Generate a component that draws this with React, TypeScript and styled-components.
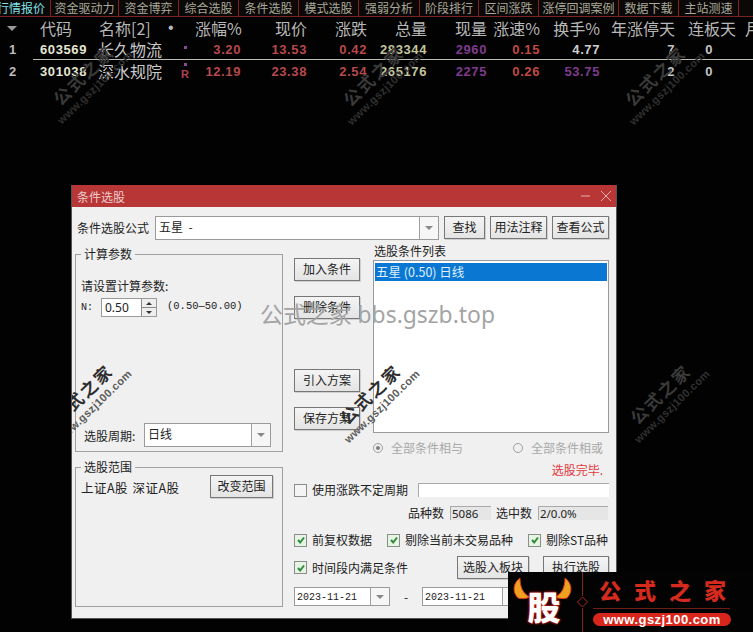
import styled, { createGlobalStyle } from "styled-components";

const CJK = `"Noto Sans CJK SC", "Liberation Sans", sans-serif`;
const COLUMNS = "33px 62px 70px 30px 46px 66px 60px 60px 60px 53px 60px 75px 61px 1fr";

const GlobalStyle = createGlobalStyle`
  html, body {
    margin: 0;
    padding: 0;
    background: #000;
  }
  body {
    font-family: ${CJK};
  }
`;

const Screen = styled.div`
  position: relative;
  width: 753px;
  height: 632px;
  overflow: hidden;
  background: #020202;
`;

const MenuBar = styled.div`
  display: flex;
  height: 16px;
  background: #0b0807;
  border-bottom: 1px solid #7a2420;
  overflow: hidden;
`;

const MenuItem = styled.div<{ $width: number; $active?: boolean }>`
  flex: 0 0 ${(props) => props.$width}px;
  display: flex;
  justify-content: ${(props) => (props.$active ? "flex-end" : "center")};
  padding-right: ${(props) => (props.$active ? "5px" : "0")};
  box-sizing: border-box;
  overflow: hidden;
  border-right: 1px solid #7a2420;
  color: ${(props) => (props.$active ? "#7fe0e8" : "#a8a89a")};
  font-size: 12px;
  line-height: 15px;
  white-space: nowrap;
`;

const MenuLabel = styled.span`
  flex-shrink: 0;
`;

const Row = styled.div<{ $height: number }>`
  display: grid;
  grid-template-columns: ${COLUMNS};
  height: ${(props) => props.$height}px;
  align-items: center;
  white-space: nowrap;
  overflow: hidden;
`;

const HeadCell = styled.div<{ $align?: string; $pad?: number }>`
  color: #b8b8b8;
  font-size: 16px;
  line-height: 22px;
  text-align: ${(props) => props.$align || "right"};
  padding-left: ${(props) => props.$pad || 0}px;
`;

const HeadDot = styled(HeadCell)`
  font-family: "Liberation Sans", sans-serif;
`;

const SortArrow = styled.span`
  display: block;
  width: 0;
  height: 0;
  margin-left: 7px;
  border-left: 5px solid transparent;
  border-right: 5px solid transparent;
  border-top: 5px solid #999;
`;

const Cell = styled.div<{ $color: string; $pad?: number }>`
  color: ${(props) => props.$color};
  font-family: "Liberation Sans", sans-serif;
  font-size: 13px;
  font-weight: 700;
  letter-spacing: 0.6px;
  text-align: right;
  padding-right: ${(props) => props.$pad || 0}px;
`;

const IndexCell = styled(Cell)`
  text-align: left;
  padding-left: 9px;
`;

const CodeCell = styled(Cell)`
  text-align: left;
  padding-left: 7px;
`;

const NameCell = styled.div`
  color: #c9c9c9;
  font-size: 16px;
  line-height: 20px;
  padding-left: 3px;
`;

const MarkCell = styled.div`
  display: flex;
  flex-direction: column;
  align-items: center;
  margin-left: 10px;
  color: #b04050;
  font-family: "Liberation Sans", sans-serif;
  font-size: 11px;
  font-weight: 700;
  line-height: 10px;
`;

const Dot = styled.span`
  width: 3px;
  height: 3px;
  margin-bottom: 3px;
  background: #8a4a9a;
`;

const RowLine = styled.div`
  height: 1px;
  margin-left: 33px;
  background: #bdbdb5;
`;

const Dialog = styled.section`
  position: absolute;
  left: 71px;
  top: 185px;
  width: 546px;
  height: 434px;
  box-sizing: border-box;
  overflow: hidden;
  background: #f0f0f0;
  border: 1px solid #555;
  border-top: none;
  color: #222;
  font-size: 12px;
`;

const TitleBar = styled.header`
  display: flex;
  align-items: center;
  justify-content: space-between;
  height: 22px;
  padding: 0 3px 0 5px;
  background: #b83636;
  color: #eccdcd;
  font-size: 12px;
`;

const WindowIcons = styled.svg`
  width: 36px;
  height: 14px;
`;

const DialogBody = styled.div`
  padding: 9px 7px 0 3px;
`;

const FormulaRow = styled.div`
  display: flex;
  align-items: flex-start;
`;

const FormulaLabel = styled.span`
  width: 80px;
  padding-left: 2px;
  box-sizing: border-box;
  line-height: 23px;
`;

const Field = styled.div<{ $width: number; $height: number }>`
  display: flex;
  flex: 0 0 ${(props) => props.$width}px;
  height: ${(props) => props.$height}px;
  box-sizing: border-box;
  background: #fff;
  border: 1px solid #9a9a9a;
`;

const FieldText = styled.span<{ $mono?: boolean }>`
  flex: 1;
  padding-left: ${(props) => (props.$mono ? "2px" : "3px")};
  font-family: ${(props) => (props.$mono ? `"Liberation Mono", monospace` : CJK)};
  font-size: ${(props) => (props.$mono ? "10px" : "12px")};
  line-height: 20px;
  white-space: pre;
`;

const DropButton = styled.span<{ $width?: number }>`
  display: flex;
  flex: 0 0 ${(props) => props.$width || 18}px;
  align-items: center;
  justify-content: center;
  background: #f6f6f6;
  border-left: 1px solid #a0a0a0;

  &::after {
    content: "";
    border-left: 4px solid transparent;
    border-right: 4px solid transparent;
    border-top: 4px solid #888;
  }
`;

const Button = styled.div<{ $width: number; $height?: number }>`
  flex: 0 0 ${(props) => props.$width}px;
  height: ${(props) => props.$height || 23}px;
  box-sizing: border-box;
  border: 1px solid #777;
  background: linear-gradient(#f4f4f4, #e4e4e4);
  box-shadow: 1px 1px 0 #cfcfcf;
  color: #222;
  font-size: 12px;
  line-height: 20px;
  text-align: center;
  white-space: nowrap;
`;

const FormulaButton = styled(Button)`
  margin-left: 5px;
`;

const Columns = styled.div`
  display: grid;
  grid-template-columns: 208px 1fr;
  gap: 11px;
  margin-top: 3px;
`;

const LeftColumn = styled.div`
  display: flex;
  flex-direction: column;
  gap: 7px;
  margin-top: 3px;
`;

const Group = styled.fieldset<{ $height: number }>`
  height: ${(props) => props.$height}px;
  box-sizing: border-box;
  margin: 0;
  padding: 0 5px 4px;
  border: 1px solid #a0a0a0;
  min-width: 0;
`;

const GroupTitle = styled.legend`
  padding: 0 3px;
  font-size: 12px;
  line-height: 16px;
`;

const ParamPrompt = styled.div`
  margin-top: 16px;
  line-height: 16px;
`;

const ParamRow = styled.div`
  display: flex;
  align-items: center;
  margin-top: 4px;
`;

const ParamName = styled.span`
  width: 20px;
  font-family: "Liberation Mono", monospace;
  font-size: 10px;
`;

const SpinBox = styled.div`
  display: flex;
  width: 56px;
  height: 19px;
  box-sizing: border-box;
  background: #fff;
  border: 1px solid #9a9a9a;
`;

const SpinValue = styled.span`
  flex: 1;
  padding-left: 3px;
  font-family: "Noto Sans", sans-serif;
  font-size: 12px;
  line-height: 18px;
`;

const SpinArrows = styled.span`
  display: flex;
  flex: 0 0 14px;
  flex-direction: column;
  border-left: 1px solid #888;
`;

const SpinArrow = styled.span<{ $up?: boolean }>`
  display: flex;
  flex: 1;
  align-items: center;
  justify-content: center;
  background: #eee;
  border-bottom: ${(props) => (props.$up ? "1px solid #888" : "none")};

  &::after {
    content: "";
    border-left: 3px solid transparent;
    border-right: 3px solid transparent;
    ${(props) => (props.$up ? "border-bottom: 3px solid #333;" : "border-top: 3px solid #333;")}
  }
`;

const ParamRange = styled.span`
  margin: -3px 0 0 10px;
  font-family: "Liberation Mono", monospace;
  font-size: 10.5px;
`;

const PeriodRow = styled.div`
  display: flex;
  align-items: center;
  margin: 106px 0 0 3px;
`;

const PeriodLabel = styled.span`
  width: 60px;
`;

const RangeRow = styled.div`
  display: flex;
  align-items: flex-start;
  justify-content: space-between;
  padding-right: 4px;
`;

const RangeText = styled.span`
  margin-top: 5px;
  font-size: 12.5px;
  line-height: 16px;
  letter-spacing: 0.5px;
  word-spacing: 1px;
`;

const RightColumn = styled.div`
  display: flex;
  flex-direction: column;
`;

const RightTop = styled.div`
  display: grid;
  grid-template-columns: 66px 1fr;
  column-gap: 13px;
`;

const ActionStack = styled.div`
  display: flex;
  flex-direction: column;
  padding-top: 15px;
`;

const ActionButton = styled(Button)<{ $gap: number }>`
  flex: 0 0 23px;
  width: 66px;
  margin-top: ${(props) => props.$gap}px;
`;

const ConditionTitle = styled.div`
  height: 17px;
  padding-left: 1px;
  line-height: 16px;
`;

const ConditionList = styled.div`
  height: 173px;
  box-sizing: border-box;
  padding: 2px 1px;
  background: #fff;
  border: 1px solid #9a9a9a;
`;

const ConditionItem = styled.div`
  height: 18px;
  padding-left: 1px;
  background: #0a78d2;
  color: #dff0ff;
  font-size: 12.5px;
  line-height: 18px;
`;

const RadioRow = styled.div`
  display: grid;
  grid-template-columns: 140px 1fr;
  margin: 8px 0 0 79px;
  color: #a8a8a8;
`;

const RadioItem = styled.label`
  display: flex;
  align-items: center;
  gap: 8px;
  line-height: 14px;
`;

const RadioMark = styled.span<{ $on?: boolean }>`
  width: 10px;
  height: 10px;
  box-sizing: border-box;
  border: 1px solid #a0a0a0;
  border-radius: 50%;
  background: ${(props) => (props.$on ? "radial-gradient(#888 30%, #f0f0f0 40%)" : "transparent")};
`;

const StatusText = styled.div`
  margin: 8px 6px 0 0;
  color: #e2383c;
  line-height: 14px;
  text-align: right;
`;

const PeriodicRow = styled.div`
  display: flex;
  align-items: center;
  justify-content: space-between;
  height: 14px;
  margin-top: 6px;
`;

const CheckLabel = styled.label`
  display: flex;
  align-items: center;
  gap: 5px;
  line-height: 14px;
  white-space: nowrap;
`;

const CheckBox = styled.span<{ $on?: boolean }>`
  display: flex;
  align-items: center;
  justify-content: center;
  width: 13px;
  height: 13px;
  box-sizing: border-box;
  border: 1px solid #8c8c8c;
  background: ${(props) => (props.$on ? "#e6f4e4" : "#f4f4f4")};
`;

const CheckIcon = styled.svg`
  width: 10px;
  height: 10px;
`;

const PeriodicInput = styled.div`
  width: 191px;
  height: 14px;
  box-sizing: border-box;
  background: #fff;
  border-left: 1px solid #aaa;
  border-top: 1px solid #aaa;
`;

const CountRow = styled.div`
  display: flex;
  align-items: center;
  justify-content: flex-end;
  height: 14px;
  margin-top: 9px;
  line-height: 14px;
`;

const CountBox = styled.span<{ $width: number }>`
  width: ${(props) => props.$width}px;
  height: 14px;
  box-sizing: border-box;
  margin: 0 5px 0 6px;
  padding-left: 1px;
  border-left: 1px solid #aaa;
  border-top: 1px solid #aaa;
  background: #e6e6e6;
  font-family: "Noto Sans", sans-serif;
  font-size: 11.5px;
  line-height: 13px;

  &:last-child {
    margin-right: 1px;
  }
`;

const OptionRow = styled.div`
  display: grid;
  grid-template-columns: 93px 141px 1fr;
  height: 14px;
  margin-top: 13px;
`;

const RunRow = styled.div`
  display: flex;
  align-items: center;
  height: 23px;
  margin-top: 9px;
`;

const RunSpacer = styled.span`
  flex: 1;
`;

const RunButton = styled(Button)`
  margin-left: 14px;
`;

const DateRow = styled.div`
  display: flex;
  align-items: center;
  margin-top: 8px;
`;

const DateDash = styled.span`
  flex: 0 0 32px;
  text-align: center;
  line-height: 19px;
`;

const Watermark = styled.div<{ $x: number; $y: number; $ink: string; $sub: string }>`
  position: absolute;
  left: ${(props) => props.$x}px;
  top: ${(props) => props.$y}px;
  width: 100px;
  transform: rotate(-44deg);
  text-align: center;
  white-space: nowrap;
  pointer-events: none;
  color: ${(props) => props.$ink};
  font-size: 17px;
  font-weight: 700;
  line-height: 18px;
  letter-spacing: 2px;

  & > small {
    display: block;
    margin-top: 2px;
    color: ${(props) => props.$sub};
    font-family: "Liberation Sans", sans-serif;
    font-size: 11px;
    letter-spacing: 0.4px;
    line-height: 12px;
  }
`;

const CenterMark = styled.div`
  position: absolute;
  left: 260px;
  top: 300px;
  color: #a4a4a4;
  font-family: "Noto Sans", ${CJK};
  font-size: 22.9px;
  line-height: 30px;
  white-space: nowrap;
`;

const Logo = styled.div`
  position: absolute;
  left: 508px;
  top: 572px;
  display: flex;
  width: 245px;
  height: 60px;
  background: #030303;
`;

const Emblem = styled.div`
  position: relative;
  flex: 0 0 68px;
  height: 60px;
  color: #fff;
  font-size: 33px;
  font-weight: 900;
  line-height: 60px;
  text-align: center;
  text-shadow: 0 0 3px #e02020, 0 0 2px #e02020;
`;

const Horns = styled.svg`
  position: absolute;
  left: 4px;
  top: 6px;
  width: 62px;
  height: 22px;
`;

const EmblemGlyph = styled.span`
  position: relative;
  display: block;
  margin: 4px 0 0 4px;
`;

const DividerIcon = styled.svg`
  flex: 0 0 13px;
  height: 60px;
`;

const BrandBlock = styled.div`
  display: flex;
  flex-direction: column;
  align-items: flex-start;
  margin-left: 4px;
`;

const BrandName = styled.div`
  height: 36px;
  padding-left: 6px;
  color: #d62a1e;
  font-size: 22px;
  font-weight: 900;
  line-height: 35px;
  letter-spacing: 13px;
  white-space: nowrap;
`;

const BrandRule = styled.div`
  width: 137px;
  height: 1px;
  background: #6a1f1a;
`;

const BrandUrl = styled.div`
  width: 138px;
  height: 13px;
  margin-top: 4px;
  border-radius: 7px;
  background: #d9261c;
  color: #fff;
  font-family: "Liberation Sans", sans-serif;
  font-size: 13px;
  font-weight: 700;
  line-height: 13px;
  letter-spacing: 0.45px;
  text-align: center;
`;

const menus = [
  { label: "行情报价", width: 51, active: true },
  { label: "资金驱动力", width: 68 },
  { label: "资金博弈", width: 60 },
  { label: "综合选股", width: 60 },
  { label: "条件选股", width: 60 },
  { label: "模式选股", width: 60 },
  { label: "强弱分析", width: 61 },
  { label: "阶段排行", width: 59 },
  { label: "区间涨跌", width: 60 },
  { label: "涨停回调案例", width: 80 },
  { label: "数据下载", width: 60 },
  { label: "主站测速", width: 60 },
];

const RED = "#b8484c";
const PURPLE = "#7f3a8e";
const OLIVE = "#c4c49c";

const stocks = [
  {
    index: "1", code: "603569", name: "长久物流", rise: "3.20", price: "13.53", change: "0.42",
    volume: "283344", current: "2960", speed: "0.15", turnover: "4.77", turnoverColor: "#cfcfcf",
    year: "7", board: "0", flag: "",
  },
  {
    index: "2", code: "301038", name: "深水规院", rise: "12.19", price: "23.38", change: "2.54",
    volume: "265176", current: "2275", speed: "0.26", turnover: "53.75", turnoverColor: PURPLE,
    year: "2", board: "0", flag: "R",
  },
];

function Check() {
  return (
    <CheckIcon viewBox="0 0 10 10">
      <path d="M2 5l2.2 2.500L8 2.500" fill="none" stroke="#2f8a3a" strokeWidth="2" />
    </CheckIcon>
  );
}

function Option({ label, on = true }: { label: string; on?: boolean }) {
  return (
    <CheckLabel>
      <CheckBox $on={on}>{on && <Check />}</CheckBox>
      {label}
    </CheckLabel>
  );
}

function Mark({ x, y, light }: { x: number; y: number; light?: boolean }) {
  return (
    <Watermark $x={x} $y={y} $ink={light ? "#2e2e2e" : "#3a3a3a"} $sub={light ? "#5c5c5c" : "#303030"}>
      公式之家
      <small>www.gszj100.com</small>
    </Watermark>
  );
}

export default function App() {
  return (
    <Screen>
      <GlobalStyle />
      <MenuBar>
        {menus.map((menu) => (
          <MenuItem key={menu.label} $width={menu.width} $active={menu.active}>
            <MenuLabel>{menu.label}</MenuLabel>
          </MenuItem>
        ))}
      </MenuBar>

      <Mark x={38} y={64} />
      <Mark x={328} y={65} />
      <Mark x={610} y={65} />
      <Mark x={615} y={383} />

      <Row $height={22}>
        <SortArrow />
        <HeadCell $align="left" $pad={7}>代码</HeadCell>
        <HeadCell $align="left" $pad={4}>名称[2]</HeadCell>
        <HeadDot $align="left" $pad={3}>•</HeadDot>
        <HeadCell>涨幅%</HeadCell>
        <HeadCell>现价</HeadCell>
        <HeadCell>涨跌</HeadCell>
        <HeadCell>总量</HeadCell>
        <HeadCell>现量</HeadCell>
        <HeadCell>涨速%</HeadCell>
        <HeadCell>换手%</HeadCell>
        <HeadCell>年涨停天</HeadCell>
        <HeadCell>连板天</HeadCell>
        <HeadCell $align="left" $pad={9}>月</HeadCell>
      </Row>

      {stocks.map((stock, i) => (
        <div key={stock.code}>
          <Row $height={i === 0 ? 20 : 22}>
            <IndexCell $color="#bdbdbd">{stock.index}</IndexCell>
            <CodeCell $color="#e6e6d2">{stock.code}</CodeCell>
            <NameCell>{stock.name}</NameCell>
            <MarkCell>
              <Dot />
              {stock.flag}
            </MarkCell>
            <Cell $color={RED}>{stock.rise}</Cell>
            <Cell $color={RED}>{stock.price}</Cell>
            <Cell $color={RED}>{stock.change}</Cell>
            <Cell $color={OLIVE}>{stock.volume}</Cell>
            <Cell $color={PURPLE}>{stock.current}</Cell>
            <Cell $color="#c04a40">{stock.speed}</Cell>
            <Cell $color={stock.turnoverColor}>{stock.turnover}</Cell>
            <Cell $color="#c4c4c4">{stock.year}</Cell>
            <Cell $color="#c4c4c4" $pad={23}>{stock.board}</Cell>
          </Row>
          {i === 0 && <RowLine />}
        </div>
      ))}

      <Dialog>
        <TitleBar>
          条件选股
          <WindowIcons viewBox="0 0 36 14">
            <path d="M4 7h9" stroke="#e2b0b0" strokeWidth="1" />
            <path d="M24 2l10 10M34 2L24 12" stroke="#e2b0b0" strokeWidth="1" />
          </WindowIcons>
        </TitleBar>
        <DialogBody>
          <FormulaRow>
            <FormulaLabel>条件选股公式</FormulaLabel>
            <Field $width={284} $height={24}>
              <FieldText>{"五星  -"}</FieldText>
              <DropButton />
            </Field>
            <FormulaButton $width={41}>查找</FormulaButton>
            <FormulaButton $width={57}>用法注释</FormulaButton>
            <FormulaButton $width={57}>查看公式</FormulaButton>
          </FormulaRow>

          <Columns>
            <LeftColumn>
              <Group $height={206}>
                <GroupTitle>计算参数</GroupTitle>
                <ParamPrompt>请设置计算参数:</ParamPrompt>
                <ParamRow>
                  <ParamName>N:</ParamName>
                  <SpinBox>
                    <SpinValue>0.50</SpinValue>
                    <SpinArrows>
                      <SpinArrow $up />
                      <SpinArrow />
                    </SpinArrows>
                  </SpinBox>
                  <ParamRange>(0.50—50.00)</ParamRange>
                </ParamRow>
                <PeriodRow>
                  <PeriodLabel>选股周期:</PeriodLabel>
                  <Field $width={127} $height={24}>
                    <FieldText>日线</FieldText>
                    <DropButton />
                  </Field>
                </PeriodRow>
              </Group>
              <Group $height={148}>
                <GroupTitle>选股范围</GroupTitle>
                <RangeRow>
                  <RangeText>上证A股 深证A股</RangeText>
                  <Button $width={63}>改变范围</Button>
                </RangeRow>
              </Group>
            </LeftColumn>

            <RightColumn>
              <RightTop>
                <ActionStack>
                  <ActionButton $width={66} $gap={0}>加入条件</ActionButton>
                  <ActionButton $width={66} $gap={15}>删除条件</ActionButton>
                  <ActionButton $width={66} $gap={50}>引入方案</ActionButton>
                  <ActionButton $width={66} $gap={15}>保存方案</ActionButton>
                </ActionStack>
                <div>
                  <ConditionTitle>选股条件列表</ConditionTitle>
                  <ConditionList>
                    <ConditionItem>五星 (0.50) 日线</ConditionItem>
                  </ConditionList>
                </div>
              </RightTop>

              <RadioRow>
                <RadioItem>
                  <RadioMark $on />
                  全部条件相与
                </RadioItem>
                <RadioItem>
                  <RadioMark />
                  全部条件相或
                </RadioItem>
              </RadioRow>

              <StatusText>选股完毕.</StatusText>

              <PeriodicRow>
                <Option label="使用涨跌不定周期" on={false} />
                <PeriodicInput />
              </PeriodicRow>

              <CountRow>
                品种数
                <CountBox $width={41}>5086</CountBox>
                选中数
                <CountBox $width={70}>2/0.0%</CountBox>
              </CountRow>

              <OptionRow>
                <Option label="前复权数据" />
                <Option label="剔除当前未交易品种" />
                <Option label="剔除ST品种" />
              </OptionRow>

              <RunRow>
                <Option label="时间段内满足条件" />
                <RunSpacer />
                <Button $width={72}>选股入板块</Button>
                <RunButton $width={66}>执行选股</RunButton>
              </RunRow>

              <DateRow>
                <Field $width={96} $height={19}>
                  <FieldText $mono>2023-11-21</FieldText>
                  <DropButton />
                </Field>
                <DateDash>-</DateDash>
                <Field $width={100} $height={19}>
                  <FieldText $mono>2023-11-21</FieldText>
                  <DropButton />
                </Field>
              </DateRow>
            </RightColumn>
          </Columns>
        </DialogBody>
        <Mark x={-35} y={198} light />
        <Mark x={253} y={198} light />
      </Dialog>

      <CenterMark>公式之家 bbs.gszb.top</CenterMark>

      <Logo>
        <Emblem>
          <Horns viewBox="0 0 62 22">
            <path d="M8 0C1 5 0 14 6 20c3 1 8 1 12-1C11 16 8 9 8 0z" fill="#f0a020" stroke="#d23a18" strokeWidth="1" />
            <path d="M53 0c7 5 8 14 2 20-3 1-8 1-12-1 7-3 10-10 10-19z" fill="#f0a020" stroke="#d23a18" strokeWidth="1" />
          </Horns>
          <EmblemGlyph>股</EmblemGlyph>
        </Emblem>
        <DividerIcon viewBox="0 0 13 60">
          <path d="M6.500 0v24M6.500 36v24" stroke="#8a221c" strokeWidth="1" />
          <path d="M6.500 25l5 5-5 5-5-5z" fill="none" stroke="#a82a20" strokeWidth="1" />
        </DividerIcon>
        <BrandBlock>
          <BrandName>公式之家</BrandName>
          <BrandRule />
          <BrandUrl>www.gszj100.com</BrandUrl>
        </BrandBlock>
      </Logo>
    </Screen>
  );
}
